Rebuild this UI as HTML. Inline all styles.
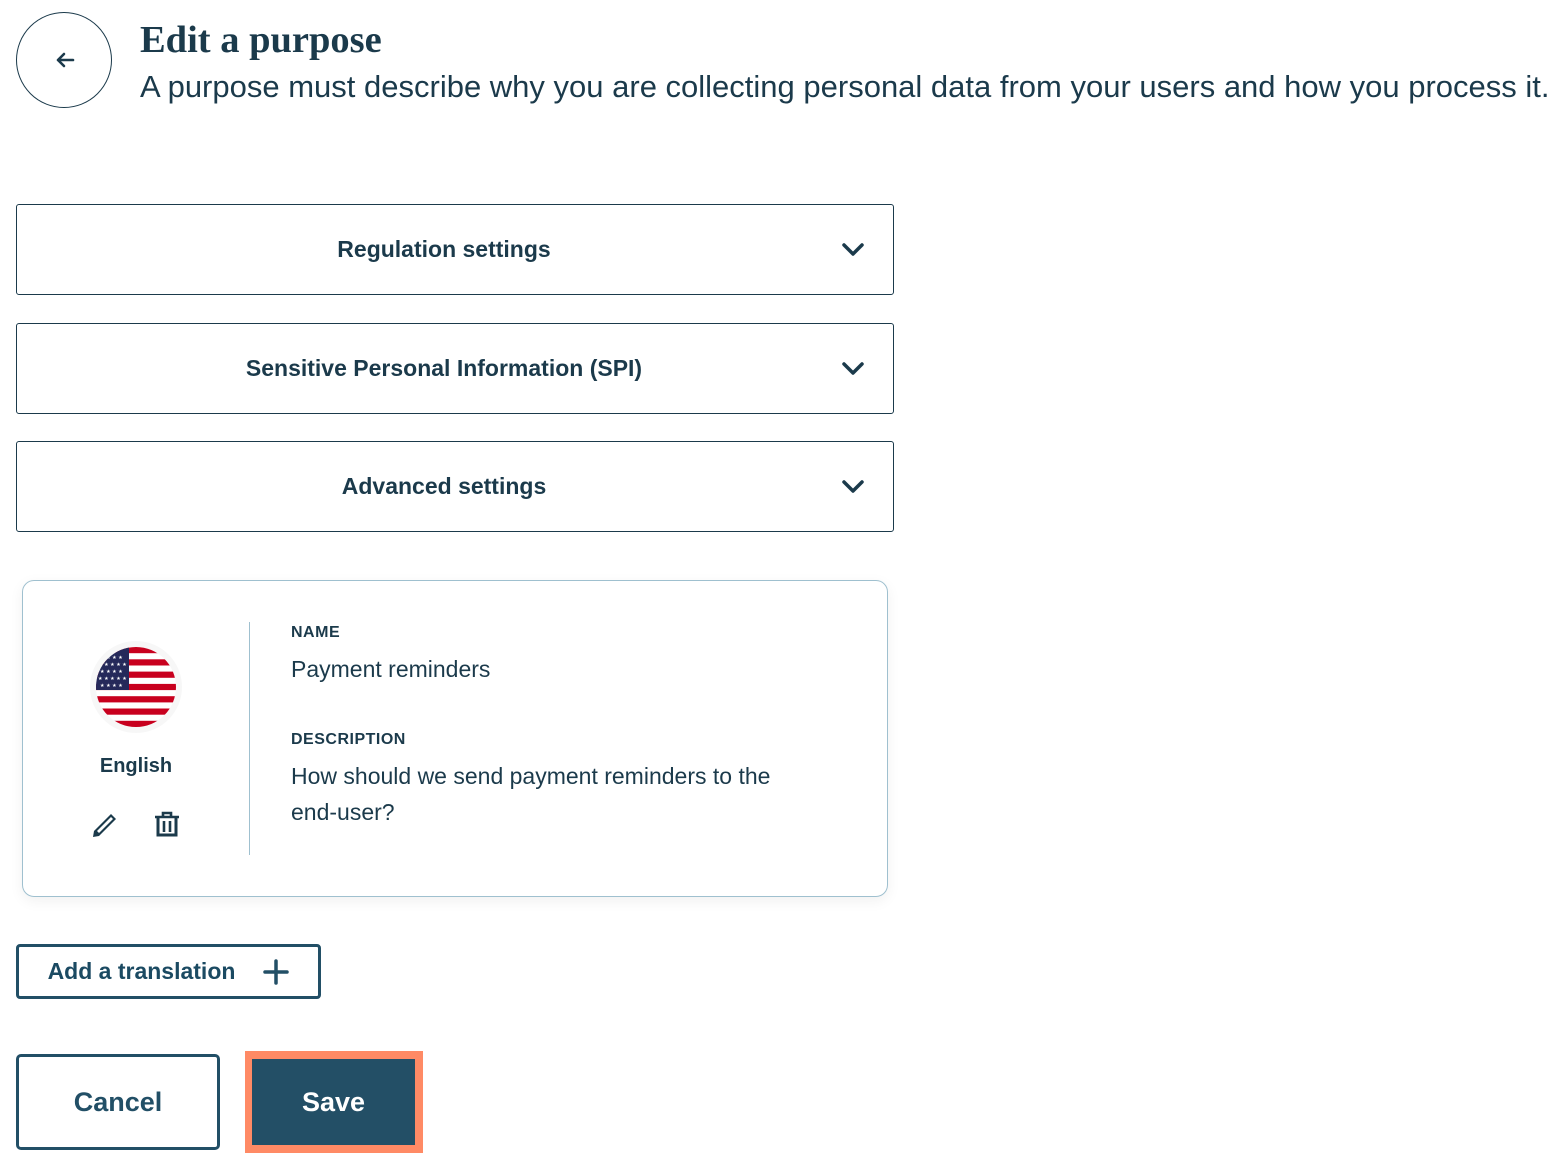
<!DOCTYPE html>
<html><head><style>
*{box-sizing:border-box;margin:0;padding:0}
body{width:1563px;height:1161px;background:#fff;font-family:"Liberation Sans",sans-serif;color:#1b3a4b;position:relative;overflow:hidden}
.abs{position:absolute}
.back{left:16px;top:12px;width:96px;height:96px;border:1px solid #1b3a4b;border-radius:50%}
h1{position:absolute;left:140px;top:18px;font-family:"Liberation Serif",serif;font-weight:bold;font-size:38.5px;color:#1b3a4b}
.sub{left:140px;top:69px;font-size:31px;white-space:nowrap;color:#1b3a4b}
.acc{position:absolute;left:16px;width:878px;height:91px;border:1px solid #1b3a4b;border-radius:3px;display:flex;align-items:center;justify-content:center;font-weight:bold;font-size:23px;padding-right:22px}
.acc svg{position:absolute;right:28px;top:37px}
.card{left:22px;top:580px;width:866px;height:317px;border:1px solid #9fc0cf;border-radius:12px;box-shadow:0 4px 14px rgba(0,0,0,0.06)}
.lbl{font-weight:bold;font-size:16px;letter-spacing:0.5px}
.txt{font-size:23px}
.btn{position:absolute;border:3px solid #224f66;border-radius:5px;font-weight:bold;color:#224f66;display:flex;align-items:center;justify-content:center}
</style></head><body>
<div class="abs back"><svg class="abs" style="left:37px;top:37px" width="22" height="20" viewBox="0 0 22 20"><path d="M19 10H4M10 4L4 10L10 16" stroke="#1b3a4b" stroke-width="2.6" fill="none" stroke-linecap="round" stroke-linejoin="round"/></svg></div>
<h1>Edit a purpose</h1>
<div class="abs sub">A purpose must describe why you are collecting personal data from your users and how you process it.</div>

<div class="acc" style="top:204px">Regulation settings<svg width="24" height="16" viewBox="0 0 24 16"><path d="M3 3L12 12L21 3" stroke="#1b3a4b" stroke-width="3.5" fill="none" stroke-linecap="round" stroke-linejoin="round"/></svg></div>
<div class="acc" style="top:323px">Sensitive Personal Information (SPI)<svg width="24" height="16" viewBox="0 0 24 16"><path d="M3 3L12 12L21 3" stroke="#1b3a4b" stroke-width="3.5" fill="none" stroke-linecap="round" stroke-linejoin="round"/></svg></div>
<div class="acc" style="top:441px">Advanced settings<svg width="24" height="16" viewBox="0 0 24 16"><path d="M3 3L12 12L21 3" stroke="#1b3a4b" stroke-width="3.5" fill="none" stroke-linecap="round" stroke-linejoin="round"/></svg></div>

<div class="abs card"></div>
<svg class="abs" style="left:86px;top:637px" width="100" height="100" viewBox="0 0 100 100">
<defs><clipPath id="c"><circle cx="50" cy="50" r="40"/></clipPath></defs>
<circle cx="50" cy="50" r="46" fill="#f7f7f7"/>
<g clip-path="url(#c)">
<rect x="0" y="0" width="100" height="100" fill="#fff"/>
<g fill="#c8001e"><rect x="0" y="10" width="100" height="6.2"/><rect x="0" y="22.3" width="100" height="6.2"/><rect x="0" y="34.6" width="100" height="6.2"/><rect x="0" y="46.9" width="100" height="6.2"/><rect x="0" y="59.2" width="100" height="6.2"/><rect x="0" y="71.5" width="100" height="6.2"/><rect x="0" y="83.8" width="100" height="6.2"/></g>
<rect x="0" y="0" width="43" height="53" fill="#25295a"/>
<g fill="#fff" font-size="5" font-family="DejaVu Sans"><text x="14" y="22">★ ★ ★ ★</text><text x="12" y="29">★ ★ ★ ★ ★</text><text x="14" y="36">★ ★ ★ ★</text><text x="12" y="43">★ ★ ★ ★ ★</text><text x="14" y="50">★ ★ ★ ★</text></g>
</g></svg>
<div class="abs" style="left:86px;width:100px;top:755px;text-align:center;font-weight:bold;font-size:20px">English</div>
<svg class="abs" style="left:90px;top:810px" width="30" height="28" viewBox="0 0 30 28"><path d="M4 21L21 4L26 9L9 26L3 27Z" fill="#1b3a4b"/><path d="M7 21L21 7L23 9L9 23Z" fill="#fff"/></svg>
<svg class="abs" style="left:153px;top:810px" width="28" height="28" viewBox="0 0 28 28"><path d="M2 7H26M10 7V3H18V7" fill="none" stroke="#1b3a4b" stroke-width="2.6"/><path d="M5 8V25H23V8" fill="none" stroke="#1b3a4b" stroke-width="3"/><path d="M11 11V22M17 11V22" stroke="#1b3a4b" stroke-width="2.6"/></svg>
<div class="abs" style="left:249px;top:622px;width:1px;height:233px;background:#9fc0cf"></div>
<div class="abs lbl" style="left:291px;top:624px">NAME</div>
<div class="abs txt" style="left:291px;top:656px">Payment reminders</div>
<div class="abs lbl" style="left:291px;top:731px">DESCRIPTION</div>
<div class="abs txt" style="left:291px;top:758px;line-height:36px;width:520px">How should we send payment reminders to the end&#8209;user?</div>

<div class="btn" style="left:16px;top:944px;width:305px;height:55px;font-size:23px;border-radius:4px;color:#1b4a62">Add a translation<svg style="margin-left:28px" width="26" height="26" viewBox="0 0 26 26"><path d="M13 2V24M2 13H24" stroke="#224f66" stroke-width="3.5" stroke-linecap="round"/></svg></div>
<div class="btn" style="left:16px;top:1054px;width:204px;height:96px;font-size:27px">Cancel</div>
<div class="abs" style="left:245px;top:1051px;width:178px;height:102px;background:#ff8a65"></div>
<div class="abs" style="left:252px;top:1059px;width:163px;height:86px;background:#234f66;color:#fff;font-weight:bold;font-size:27px;display:flex;align-items:center;justify-content:center">Save</div>
</body></html>
